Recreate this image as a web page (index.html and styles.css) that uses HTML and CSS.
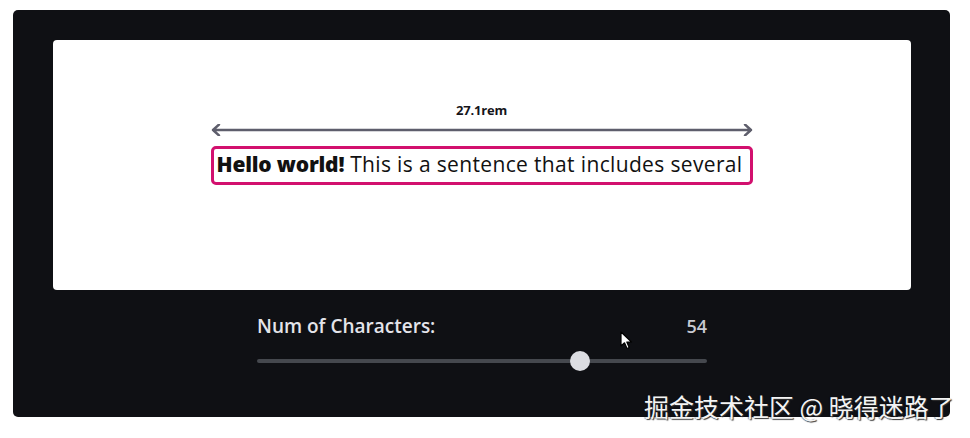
FILE: index.html
```html
<!DOCTYPE html>
<html lang="en">
<head>
    <meta charset="UTF-8">
    <title>Text width demo</title>
    <link rel="stylesheet" href="styles.css">
</head>
<body>
    <div class="panel">
        <div class="stage">
            <div class="measure">
                <div class="ruler">
                    <span class="ruler-label">27.1rem</span>
                    <svg class="ruler-arrow" width="542" height="12" viewBox="0 0 542 12">
                        <path d="M2 6 H540 M8 0.5 L2 6 L8 11.5 M534 0.5 L540 6 L534 11.5" fill="none" stroke="#5e5e6c" stroke-width="2.4" stroke-linecap="round" stroke-linejoin="round"/>
                    </svg>
                </div>
                <p class="sample"><strong>Hello world!</strong> This is a sentence that includes several</p>
            </div>
        </div>
        <div class="controls">
            <div class="control-head">
                <label for="chars">Num of Characters:</label>
                <span class="value">54</span>
            </div>
            <div class="slider">
                <div class="track"></div>
                <div class="thumb"></div>
            </div>
        </div>
        <svg class="cursor" width="14" height="20" viewBox="0 0 14 20">
            <path d="M1 1 L1 15 L4.5 11.8 L7 17.5 L9.2 16.5 L6.8 11 L11.5 11 Z" fill="#fff" stroke="#000" stroke-width="1.2" stroke-linejoin="round"/>
        </svg>
    </div>
    <div class="watermark">掘金技术社区 @ 晓得迷路了</div>
</body>
</html>
```

FILE: styles.css
```css
body {
    margin: 0;
    padding: 10px 20px 0 13px;
    background: #fff;
    font-family: 'Open Sans', sans-serif;
}
.panel {
    position: relative;
    width: 937px;
    height: 407px;
    box-sizing: border-box;
    padding: 30px 39px 0 40px;
    background: #0f1014;
    border-radius: 5px;
}
.stage {
    height: 250px;
    background: #fff;
    border-radius: 4px;
    display: flex;
    align-items: center;
    justify-content: center;
}
.measure {
    position: relative;
    margin-left: -1px;
}
.ruler {
    position: absolute;
    left: 0;
    right: 0;
    bottom: 100%;
    margin-bottom: 10px;
    display: flex;
    flex-direction: column;
    align-items: center;
}
.ruler-label {
    font-size: 13px;
    font-weight: 700;
    color: #15151a;
    margin-bottom: 5px;
    letter-spacing: -0.2px;
}
.ruler-arrow {
    display: block;
}
.sample {
    margin: 0;
    width: 542px;
    box-sizing: border-box;
    padding: 3px 0 5px 3px;
    border: 3px solid #d2106e;
    border-radius: 5px;
    font-size: 21px;
    line-height: 25px;
    letter-spacing: 0.35px;
    color: #111;
    white-space: nowrap;
}
.sample strong {
    font-weight: 800;
    letter-spacing: -0.2px;
}
.controls {
    width: 450px;
    margin: 23px auto 0;
}
.control-head {
    display: flex;
    justify-content: space-between;
    align-items: baseline;
    color: #e4e4ea;
}
.control-head label {
    font-size: 19px;
    font-weight: 600;
}
.value {
    font-size: 18px;
    font-weight: 600;
    color: #c9cad2;
}
.slider {
    position: relative;
    height: 20px;
    margin-top: 12px;
    display: flex;
    align-items: center;
}
.track {
    flex: 1;
    height: 4px;
    border-radius: 2px;
    background: #45484e;
}
.thumb {
    position: absolute;
    left: 313px;
    top: 0;
    width: 20px;
    height: 20px;
    border-radius: 50%;
    background: #dcdde2;
}
.cursor {
    position: absolute;
    left: 607px;
    top: 321px;
}
.watermark {
    position: absolute;
    left: 644px;
    top: 392px;
    font-family: 'Noto Sans CJK SC', sans-serif;
    font-size: 25px;
    line-height: 28px;
    color: #f4f4f4;
    text-shadow: 1px 1px 1px #333, -1px 0 1px rgba(0, 0, 0, 0.4);
    white-space: nowrap;
}
```
